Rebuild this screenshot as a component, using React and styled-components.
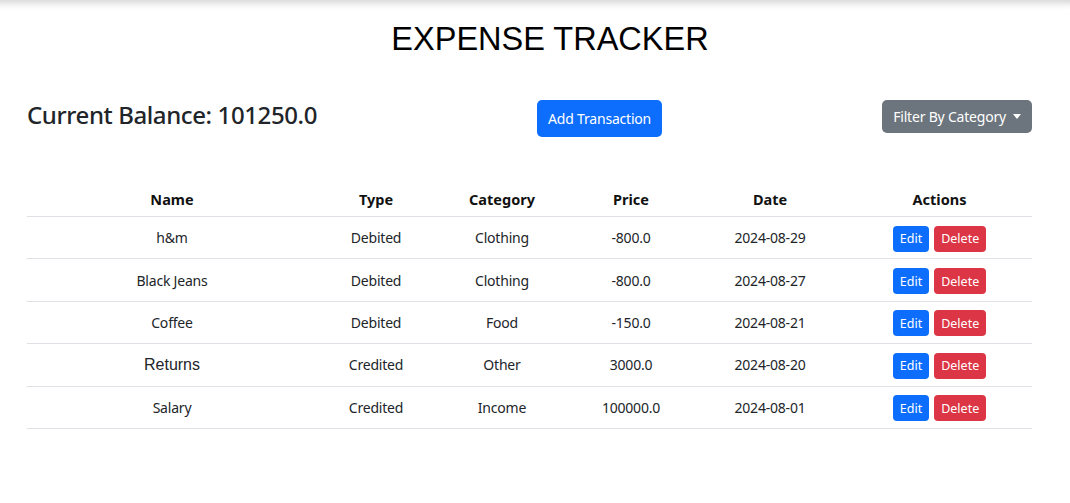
import React from "react"
import styled, { createGlobalStyle } from "styled-components"

const GlobalStyle = createGlobalStyle`
  html, body {
    margin: 0;
    padding: 0;
    background: #fff;
  }
  body {
    font-family: "Noto Sans", "Open Sans", sans-serif;
    color: #212529;
  }
`

const TopShade = styled.div`
  height: 10px;
  background: linear-gradient(to bottom, #dcdcdc, #f6f6f6 60%, #fff);
`

const Title = styled.h1`
  margin: 10px 0 0;
  padding-left: 30px;
  font-family: "Liberation Sans", Arial, sans-serif;
  font-weight: 400;
  font-size: 32.5px;
  line-height: 38px;
  text-align: center;
  color: #000;
`

const Container = styled.div`
  padding: 0 38px 0 27px;
`

const Toolbar = styled.div`
  margin-top: 42px;
  display: flex;
  justify-content: space-between;
  align-items: flex-start;
`

const Balance = styled.h3`
  margin: 2px 0 0;
  font-size: 24px;
  font-weight: 500;
  letter-spacing: -0.4px;
  line-height: 26px;
  color: #212529;
`

const Button = styled.button`
  font-family: "Noto Sans", sans-serif;
  border: none;
  color: #fff;
  cursor: pointer;
  background: ${props => props.variant === "secondary" ? "#6c757d" : props.variant === "danger" ? "#dc3545" : "#0d6efd"};
  font-size: ${props => props.small ? "12.5px" : "14px"};
  letter-spacing: ${props => props.small ? "0" : "-0.2px"};
  height: ${props => props.small ? "26px" : props.tall ? "37px" : "33px"};
  padding: ${props => props.small ? "0 7px" : "0 11px 1px"};
  border-radius: ${props => props.small ? "4px" : "5px"};
  display: inline-flex;
  align-items: center;
  gap: 7px;
`

const Caret = styled.span`
  width: 0;
  height: 0;
  border-left: 4.5px solid transparent;
  border-right: 4.5px solid transparent;
  border-top: 5px solid #fff;
`

const Table = styled.table`
  margin-top: 45px;
  width: 100%;
  border-collapse: collapse;
  table-layout: fixed;
  font-size: 14px;
`

const HeadCell = styled.th`
  height: 34px;
  padding: 0 8px;
  font-size: 14.5px;
  font-weight: 700;
  color: #111;
  text-align: center;
  border-bottom: 1px solid #dee2e6;
`

const Cell = styled.td`
  height: 41.4px;
  padding: 0 8px;
  text-align: center;
  border-bottom: 1px solid #dee2e6;
  color: #212529;
  letter-spacing: ${props => props.plain ? "0" : "-0.2px"};
  font-family: ${props => props.plain ? "\"Liberation Sans\", Arial, sans-serif" : "inherit"};
  font-size: ${props => props.plain ? "16px" : "inherit"};
`

const Actions = styled.div`
  display: flex;
  justify-content: center;
  gap: 5px;
  padding-top: 2px;
`

const columns = [
  { label: "Name", width: 290 },
  { label: "Type", width: 118 },
  { label: "Category", width: 134 },
  { label: "Price", width: 124 },
  { label: "Date", width: 154 },
  { label: "Actions", width: 185 },
]

const transactions = [
  { name: "h&m", type: "Debited", category: "Clothing", price: "-800.0", date: "2024-08-29" },
  { name: "Black Jeans", type: "Debited", category: "Clothing", price: "-800.0", date: "2024-08-27" },
  { name: "Coffee", type: "Debited", category: "Food", price: "-150.0", date: "2024-08-21" },
  { name: "Returns", type: "Credited", category: "Other", price: "3000.0", date: "2024-08-20", plain: true },
  { name: "Salary", type: "Credited", category: "Income", price: "100000.0", date: "2024-08-01" },
]

export default function App() {
  return (
    <>
      <GlobalStyle />
      <TopShade />
      <Title>EXPENSE TRACKER</Title>
      <Container>
        <Toolbar>
          <Balance>Current Balance: 101250.0</Balance>
          <Button tall>Add Transaction</Button>
          <Button variant="secondary">Filter By Category <Caret /></Button>
        </Toolbar>
        <Table>
          <colgroup>
            {columns.map(c => <col key={c.label} style={{ width: c.width }} />)}
          </colgroup>
          <thead>
            <tr>
              {columns.map(c => <HeadCell key={c.label}>{c.label}</HeadCell>)}
            </tr>
          </thead>
          <tbody>
            {transactions.map(t =>
              <tr key={t.name}>
                <Cell plain={t.plain}>{t.name}</Cell>
                <Cell>{t.type}</Cell>
                <Cell>{t.category}</Cell>
                <Cell>{t.price}</Cell>
                <Cell>{t.date}</Cell>
                <Cell>
                  <Actions>
                    <Button small>Edit</Button>
                    <Button small variant="danger">Delete</Button>
                  </Actions>
                </Cell>
              </tr>
            )}
          </tbody>
        </Table>
      </Container>
    </>
  )
}
